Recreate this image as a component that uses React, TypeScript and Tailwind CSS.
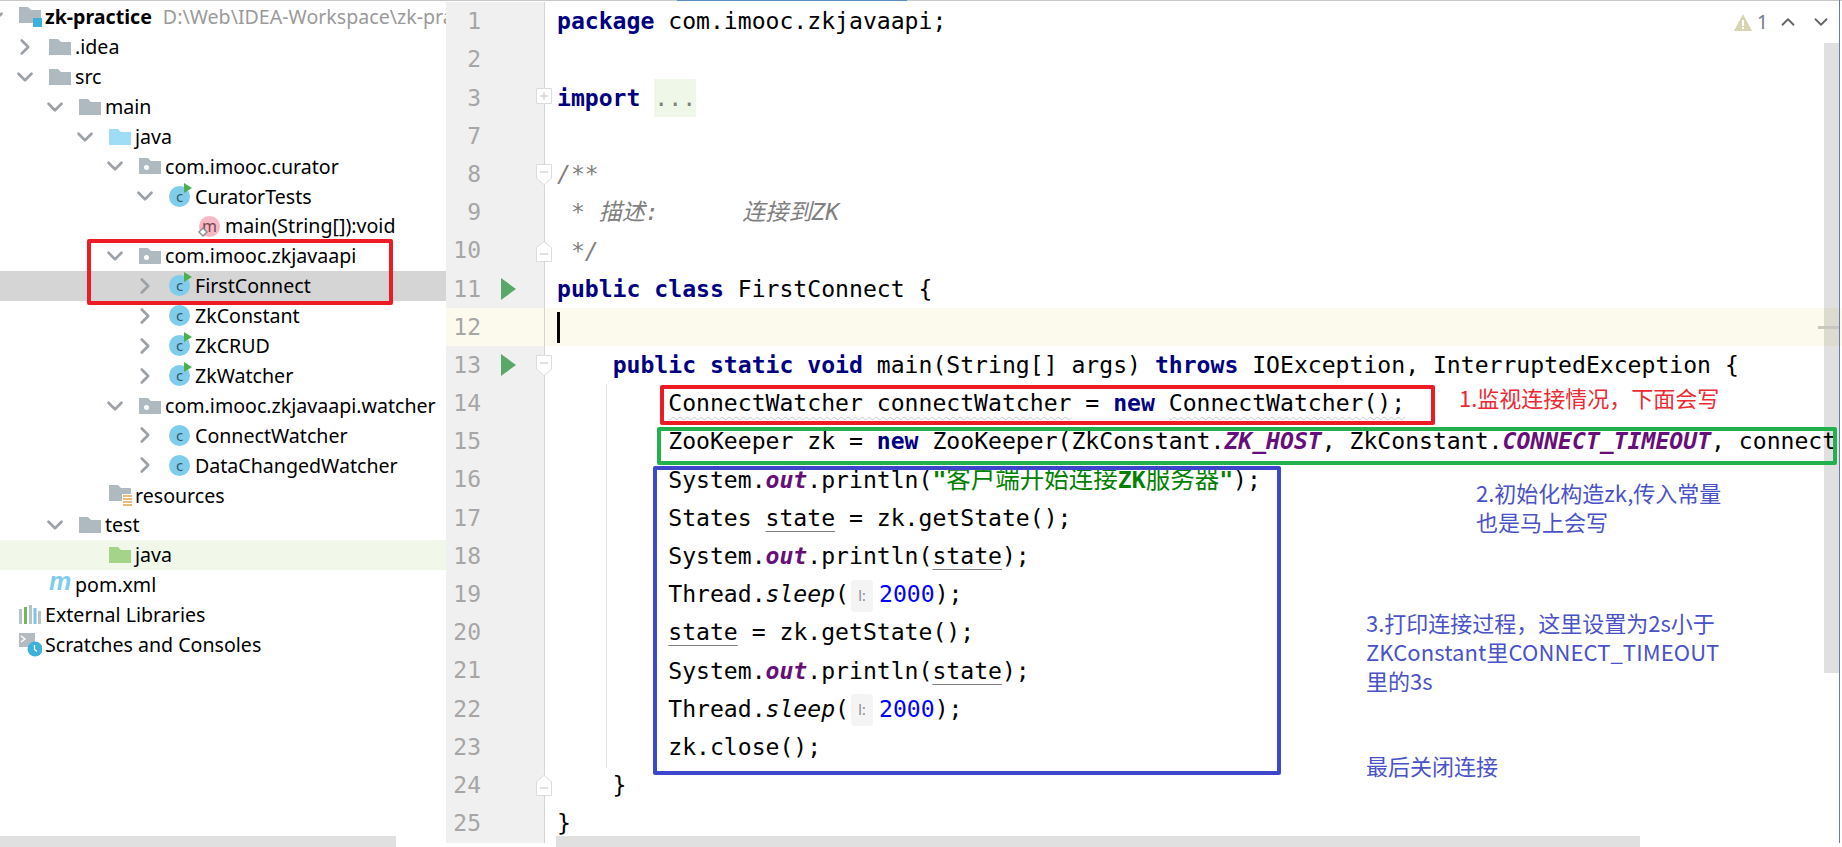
import React from 'react';
import { ChevronDown, ChevronRight, ChevronUp } from 'lucide-react';

type IconKind = 'module' | 'folder' | 'source' | 'testSource' | 'package' | 'resources' | 'class' | 'runClass' | 'method' | 'maven' | 'libs' | 'scratches';

type TreeRow = {
  label: string;
  level: number;
  icon: IconKind;
  arrow?: 'open' | 'closed';
  bold?: boolean;
  hint?: string;
  bg?: string;
};

const treeRows: TreeRow[] = [
  { label: 'zk-practice', level: 0, icon: 'module', arrow: 'open', bold: true, hint: 'D:\\Web\\IDEA-Workspace\\zk-practice' },
  { label: '.idea', level: 1, icon: 'folder', arrow: 'closed' },
  { label: 'src', level: 1, icon: 'folder', arrow: 'open' },
  { label: 'main', level: 2, icon: 'folder', arrow: 'open' },
  { label: 'java', level: 3, icon: 'source', arrow: 'open' },
  { label: 'com.imooc.curator', level: 4, icon: 'package', arrow: 'open' },
  { label: 'CuratorTests', level: 5, icon: 'runClass', arrow: 'open' },
  { label: 'main(String[]):void', level: 6, icon: 'method' },
  { label: 'com.imooc.zkjavaapi', level: 4, icon: 'package', arrow: 'open' },
  { label: 'FirstConnect', level: 5, icon: 'runClass', arrow: 'closed', bg: 'bg-[#d5d5d5]' },
  { label: 'ZkConstant', level: 5, icon: 'class', arrow: 'closed' },
  { label: 'ZkCRUD', level: 5, icon: 'runClass', arrow: 'closed' },
  { label: 'ZkWatcher', level: 5, icon: 'runClass', arrow: 'closed' },
  { label: 'com.imooc.zkjavaapi.watcher', level: 4, icon: 'package', arrow: 'open' },
  { label: 'ConnectWatcher', level: 5, icon: 'class', arrow: 'closed' },
  { label: 'DataChangedWatcher', level: 5, icon: 'class', arrow: 'closed' },
  { label: 'resources', level: 3, icon: 'resources' },
  { label: 'test', level: 2, icon: 'folder', arrow: 'open' },
  { label: 'java', level: 3, icon: 'testSource', bg: 'bg-[#f1f8ea]' },
  { label: 'pom.xml', level: 1, icon: 'maven' },
  { label: 'External Libraries', level: 0, icon: 'libs' },
  { label: 'Scratches and Consoles', level: 0, icon: 'scratches' },
];

const FolderShape = ({ color }: { color: string }) => (
  <path d="M0 1h9l3 3h10v13H0z" fill={color} />
);

const ClassBadge = ({ run }: { run?: boolean }) => (
  <div className="relative w-[21px] h-[21px] rounded-full bg-[#7fcdea] flex items-center justify-center text-[15px] leading-none text-[#35566a]">
    c
    {run && (
      <svg className="absolute -right-[2px] -top-[3px]" width="8" height="10" viewBox="0 0 8 10">
        <path d="M0 0l8 5-8 5z" fill="#4caf50" />
      </svg>
    )}
  </div>
);

const TreeIcon = ({ kind }: { kind: IconKind }) => {
  switch (kind) {
    case 'module':
      return (
        <svg width="23" height="22" viewBox="0 0 23 22">
          <FolderShape color="#aeb9c0" />
          <rect x="14" y="12" width="9" height="9" fill="#3cb1dc" />
        </svg>
      );
    case 'folder':
      return <svg width="22" height="18" viewBox="0 0 22 18"><FolderShape color="#aeb9c0" /></svg>;
    case 'source':
      return <svg width="22" height="18" viewBox="0 0 22 18"><FolderShape color="#9fdcf5" /></svg>;
    case 'testSource':
      return <svg width="22" height="18" viewBox="0 0 22 18"><FolderShape color="#a3d48a" /></svg>;
    case 'package':
      return (
        <svg width="22" height="18" viewBox="0 0 22 18">
          <FolderShape color="#aeb9c0" />
          <circle cx="7.5" cy="10.5" r="2.5" fill="#fff" />
        </svg>
      );
    case 'resources':
      return (
        <svg width="24" height="23" viewBox="0 0 24 23">
          <FolderShape color="#aeb9c0" />
          <rect x="13" y="10" width="11" height="13" fill="#fff" />
          <path d="M14 12h9M14 15h9M14 18h9M14 21h9" stroke="#e0a850" strokeWidth="1.6" />
        </svg>
      );
    case 'class':
      return <ClassBadge />;
    case 'runClass':
      return <ClassBadge run />;
    case 'method':
      return (
        <div className="relative w-[21px] h-[21px] rounded-full bg-[#f7b8c6] flex items-center justify-center text-[16px] leading-none text-[#7a4650]">
          m
          <svg className="absolute -left-[1px] bottom-0" width="10" height="10" viewBox="0 0 10 10">
            <path d="M5 1l4 4-4 4-4-4z" fill="#fff" stroke="#8f8f8f" strokeWidth="1.5" />
          </svg>
        </div>
      );
    case 'maven':
      return <div className="text-[25px] leading-none font-bold italic text-[#7fcdea] -mt-[6px]" style={{ fontFamily: '"Liberation Sans", sans-serif' }}>m</div>;
    case 'libs':
      return (
        <svg width="22" height="20" viewBox="0 0 22 20">
          <rect x="0" y="4" width="3" height="15" fill="#b8c2c8" />
          <rect x="5" y="2" width="3" height="17" fill="#72b65a" />
          <rect x="10" y="0" width="3" height="19" fill="#b8c2c8" />
          <rect x="14.5" y="3" width="3" height="16" fill="#7fc4e4" />
          <rect x="19" y="6" width="3" height="13" fill="#b8c2c8" />
        </svg>
      );
    case 'scratches':
      return (
        <svg width="23" height="24" viewBox="0 0 23 24">
          <rect x="0" y="0" width="16" height="14" fill="#b4bcc2" />
          <path d="M2 3l4 3-4 3" fill="none" stroke="#fff" strokeWidth="1.4" />
          <circle cx="16" cy="16" r="7.5" fill="#3cb1dc" />
          <path d="M15.5 12v4.5l2.5 2" fill="none" stroke="#fff" strokeWidth="1.3" />
        </svg>
      );
  }
};

const ProjectTree = () => (
  <div className="w-[446px] shrink-0 pt-[1px] overflow-hidden" style={{ fontFamily: '"Noto Sans", "Noto Sans CJK SC", sans-serif' }}>
    {treeRows.map((row, i) => (
      <div key={i} className={`h-[29.9px] overflow-hidden text-[19.6px] text-black whitespace-nowrap ${row.bg || ''}`}>
        <div className="h-full flex items-center" style={{ marginLeft: 30 * row.level - 18 }}>
          <span className="w-[37px] shrink-0 flex text-[#9ba1a6]">
            {row.arrow === 'open' && <ChevronDown size={26} strokeWidth={2.4} />}
            {row.arrow === 'closed' && <ChevronRight size={26} strokeWidth={2.4} />}
          </span>
          <span className="w-[26px] shrink-0 flex items-center">
            <TreeIcon kind={row.icon} />
          </span>
          <span className={row.bold ? 'font-bold' : ''}>{row.label}</span>
          {row.hint && <span className="ml-[11px] text-[#9a9a9a]">{row.hint}</span>}
        </div>
      </div>
    ))}
  </div>
);

const Kw = ({ children }: { children: React.ReactNode }) => <span className="font-bold text-[#000080]">{children}</span>;
const Field = ({ children }: { children: React.ReactNode }) => <span className="font-bold italic text-[#660e7a]">{children}</span>;
const Num = ({ children }: { children: React.ReactNode }) => <span className="text-[#0000ff]">{children}</span>;
const Doc = ({ children }: { children: React.ReactNode }) => <span className="italic text-[#808080]">{children}</span>;
const Reassigned = ({ children }: { children: React.ReactNode }) => <span className="underline decoration-[#808080] decoration-1 underline-offset-[5px]">{children}</span>;
const Squiggle = ({ children }: { children: React.ReactNode }) => <span className="underline decoration-wavy decoration-[#c8c8c8] decoration-1 underline-offset-[5px]">{children}</span>;
const Hint = () => (
  <span className="inline-block w-[22px] h-[32px] ml-[2px] mr-[6px] align-middle text-center rounded bg-[#f4f4f4] text-[14px] leading-[32px] text-[#8a8a8a]" style={{ fontFamily: '"Noto Sans", sans-serif' }}>l:</span>
);

type CodeLine = { n: number; code: React.ReactNode; run?: boolean; fold?: 'plus' | 'down' | 'up'; current?: boolean };

const codeLines: CodeLine[] = [
  { n: 1, code: <><Kw>package</Kw> com.imooc.zkjavaapi;</> },
  { n: 2, code: null },
  { n: 3, fold: 'plus', code: <><Kw>import</Kw> <span className="inline-block h-[38px] bg-[#eef7e8] text-[#808080]">...</span></> },
  { n: 7, code: null },
  { n: 8, fold: 'down', code: <Doc>/**</Doc> },
  { n: 9, code: <Doc>{' * 描述:      连接到ZK'}</Doc> },
  { n: 10, fold: 'up', code: <Doc>{' */'}</Doc> },
  { n: 11, run: true, code: <><Kw>public class</Kw> FirstConnect {'{'}</> },
  { n: 12, current: true, code: null },
  { n: 13, run: true, fold: 'down', code: <>{'    '}<Kw>public static void</Kw> main(String[] args) <Kw>throws</Kw> IOException, InterruptedException {'{'}</> },
  { n: 14, code: <>{'        '}<Squiggle>ConnectWatcher connectWatcher</Squiggle> = <Kw>new</Kw> <Squiggle>ConnectWatcher();</Squiggle></> },
  { n: 15, code: <>{'        '}ZooKeeper zk = <Kw>new</Kw> ZooKeeper(ZkConstant.<Field>ZK_HOST</Field>, ZkConstant.<Field>CONNECT_TIMEOUT</Field>, connect</> },
  { n: 16, code: <>{'        '}System.<Field>out</Field>.println(<span className="text-[#008000]"><b>"</b><span className="text-[24.5px]">客户端开始连接</span><b>ZK</b><span className="text-[24.5px]">服务器</span><b>"</b></span>);</> },
  { n: 17, code: <>{'        '}States <Reassigned>state</Reassigned> = zk.getState();</> },
  { n: 18, code: <>{'        '}System.<Field>out</Field>.println(<Reassigned>state</Reassigned>);</> },
  { n: 19, code: <>{'        '}Thread.<span className="italic">sleep</span>(<Hint /><Num>2000</Num>);</> },
  { n: 20, code: <>{'        '}<Reassigned>state</Reassigned> = zk.getState();</> },
  { n: 21, code: <>{'        '}System.<Field>out</Field>.println(<Reassigned>state</Reassigned>);</> },
  { n: 22, code: <>{'        '}Thread.<span className="italic">sleep</span>(<Hint /><Num>2000</Num>);</> },
  { n: 23, code: <>{'        '}zk.close();</> },
  { n: 24, fold: 'up', code: '    }' },
  { n: 25, code: '}' },
];

const FoldMark = ({ type }: { type: 'plus' | 'down' | 'up' }) => {
  const outline =
    type === 'plus' ? 'M.5.5h15v15H.5z' : type === 'down' ? 'M.5.5h15v14L8 20.5.5 14.5z' : 'M8 .5l7.5 6v14H.5v-14z';
  const cy = type === 'up' ? 13 : 8;
  return (
    <svg className="absolute right-[-8px] top-[9px] overflow-visible" width="16" height="21" viewBox="0 0 16 21">
      <path d={outline} fill="#fff" stroke="#dcdcdc" />
      <path d={`M4 ${cy}h8`} stroke="#c4c4c4" />
      {type === 'plus' && <path d="M8 4v8" stroke="#c4c4c4" />}
    </svg>
  );
};

const Editor = () => (
  <div className="flex-1 min-w-0 pt-[1.4px] overflow-hidden">
    {codeLines.map((line) => (
      <div key={line.n} className={`h-[38.2px] flex ${line.current ? 'bg-[#fcfaed]' : ''}`}>
        <div className={`relative w-[98.5px] shrink-0 flex items-center border-r border-[#d5d5d5] ${line.current ? 'bg-[#fcfaed]' : 'bg-[#f0f0f0]'}`}>
          <span className="w-[35px] shrink-0 text-right text-[23px] text-[#a6a6a6]" style={{ fontFamily: '"DejaVu Sans Mono", monospace' }}>{line.n}</span>
          {line.run && (
            <svg className="ml-[19.5px]" width="15" height="22" viewBox="0 0 15 22">
              <path d="M0 0l15 11L0 22z" fill="#59a869" />
            </svg>
          )}
          {line.fold && <FoldMark type={line.fold} />}
        </div>
        <pre className="ml-[12.5px] text-[23.1px] leading-[38.2px] text-black whitespace-pre" style={{ fontFamily: '"DejaVu Sans Mono", "Noto Sans CJK SC", monospace' }}>{line.code}</pre>
      </div>
    ))}
  </div>
);

const Note = ({ className, children }: { className: string; children: React.ReactNode }) => (
  <div className={`absolute text-[22px] leading-[29px] whitespace-nowrap ${className}`} style={{ fontFamily: '"Noto Sans CJK SC", "Noto Sans", sans-serif' }}>{children}</div>
);

export default function App() {
  return (
    <div className="relative w-[1842px] h-[847px] overflow-hidden bg-white">
      <div className="flex h-full border-t border-[#c8c8c8]">
        <ProjectTree />
        <Editor />
      </div>

      {/* top strip, indent guide, caret */}
      <div className="absolute left-[677px] top-0 w-[230px] h-[1px] bg-[#5a8fc0]" />
      <div className="absolute left-[606px] top-[384px] h-[384px] w-[1px] bg-[#e6e6e6]" />
      <div className="absolute left-[557px] top-[312px] w-[3px] h-[31px] bg-black" />

      {/* inspection widget */}
      <div className="absolute left-[1734px] top-[9px] h-[26px] flex items-center text-[#666]">
        <svg width="18" height="17" viewBox="0 0 18 17">
          <path d="M9 0l9 17H0z" fill="#d8d3b0" />
          <rect x="8" y="6" width="2" height="6" fill="#fff" />
          <rect x="8" y="13" width="2" height="2" fill="#fff" />
        </svg>
        <span className="ml-[5px] w-[20px] text-[19px] leading-[26px] text-[#6e7a8a]" style={{ fontFamily: '"Noto Sans", sans-serif' }}>1</span>
        <ChevronUp size={22} />
        <ChevronDown className="ml-[11px]" size={22} />
      </div>

      {/* scrollbars */}
      <div className="absolute left-[1824px] top-[43px] w-[15px] h-[630px] bg-black/[0.12]" />
      <div className="absolute left-[1818px] top-[326px] w-[21px] h-[3px] bg-[#c8c8c0]" />
      <div className="absolute left-[1839px] top-0 w-[1px] h-[843px] bg-[#6a7aa5]" />
      <div className="absolute left-0 top-[836px] w-[396px] h-[11px] bg-[#e0e0e0]" />
      <div className="absolute left-[556px] top-[836px] w-[1084px] h-[11px] bg-[#e0e0e0]" />

      {/* red and blue markup */}
      <div className="absolute left-[87px] top-[239px] w-[306px] h-[66px] border-[4px] border-[#ed1c24] rounded-[2px]" />
      <div className="absolute left-[660px] top-[385px] w-[775px] h-[40px] border-[4px] border-[#ed1c24] rounded-[2px]" />
      <div className="absolute left-[657px] top-[427px] w-[1180px] h-[38px] border-[4px] border-[#22b14c] rounded-[2px]" />
      <div className="absolute left-[653px] top-[466px] w-[628px] h-[309px] border-[4px] border-[#3f48cc] rounded-[2px]" />

      <Note className="left-[1459px] top-[383px] text-[#ed2a32]">1.监视连接情况，下面会写</Note>
      <Note className="left-[1476px] top-[478px] text-[#4a52c8]">2.初始化构造zk,传入常量<br />也是马上会写</Note>
      <Note className="left-[1366px] top-[608px] text-[#4a52c8]">3.打印连接过程，这里设置为2s小于<br /><span className="tracking-[0.1px]">ZKConstant里CONNECT_TIMEOUT</span><br />里的3s</Note>
      <Note className="left-[1366px] top-[751px] text-[#4a52c8]">最后关闭连接</Note>
    </div>
  );
}
